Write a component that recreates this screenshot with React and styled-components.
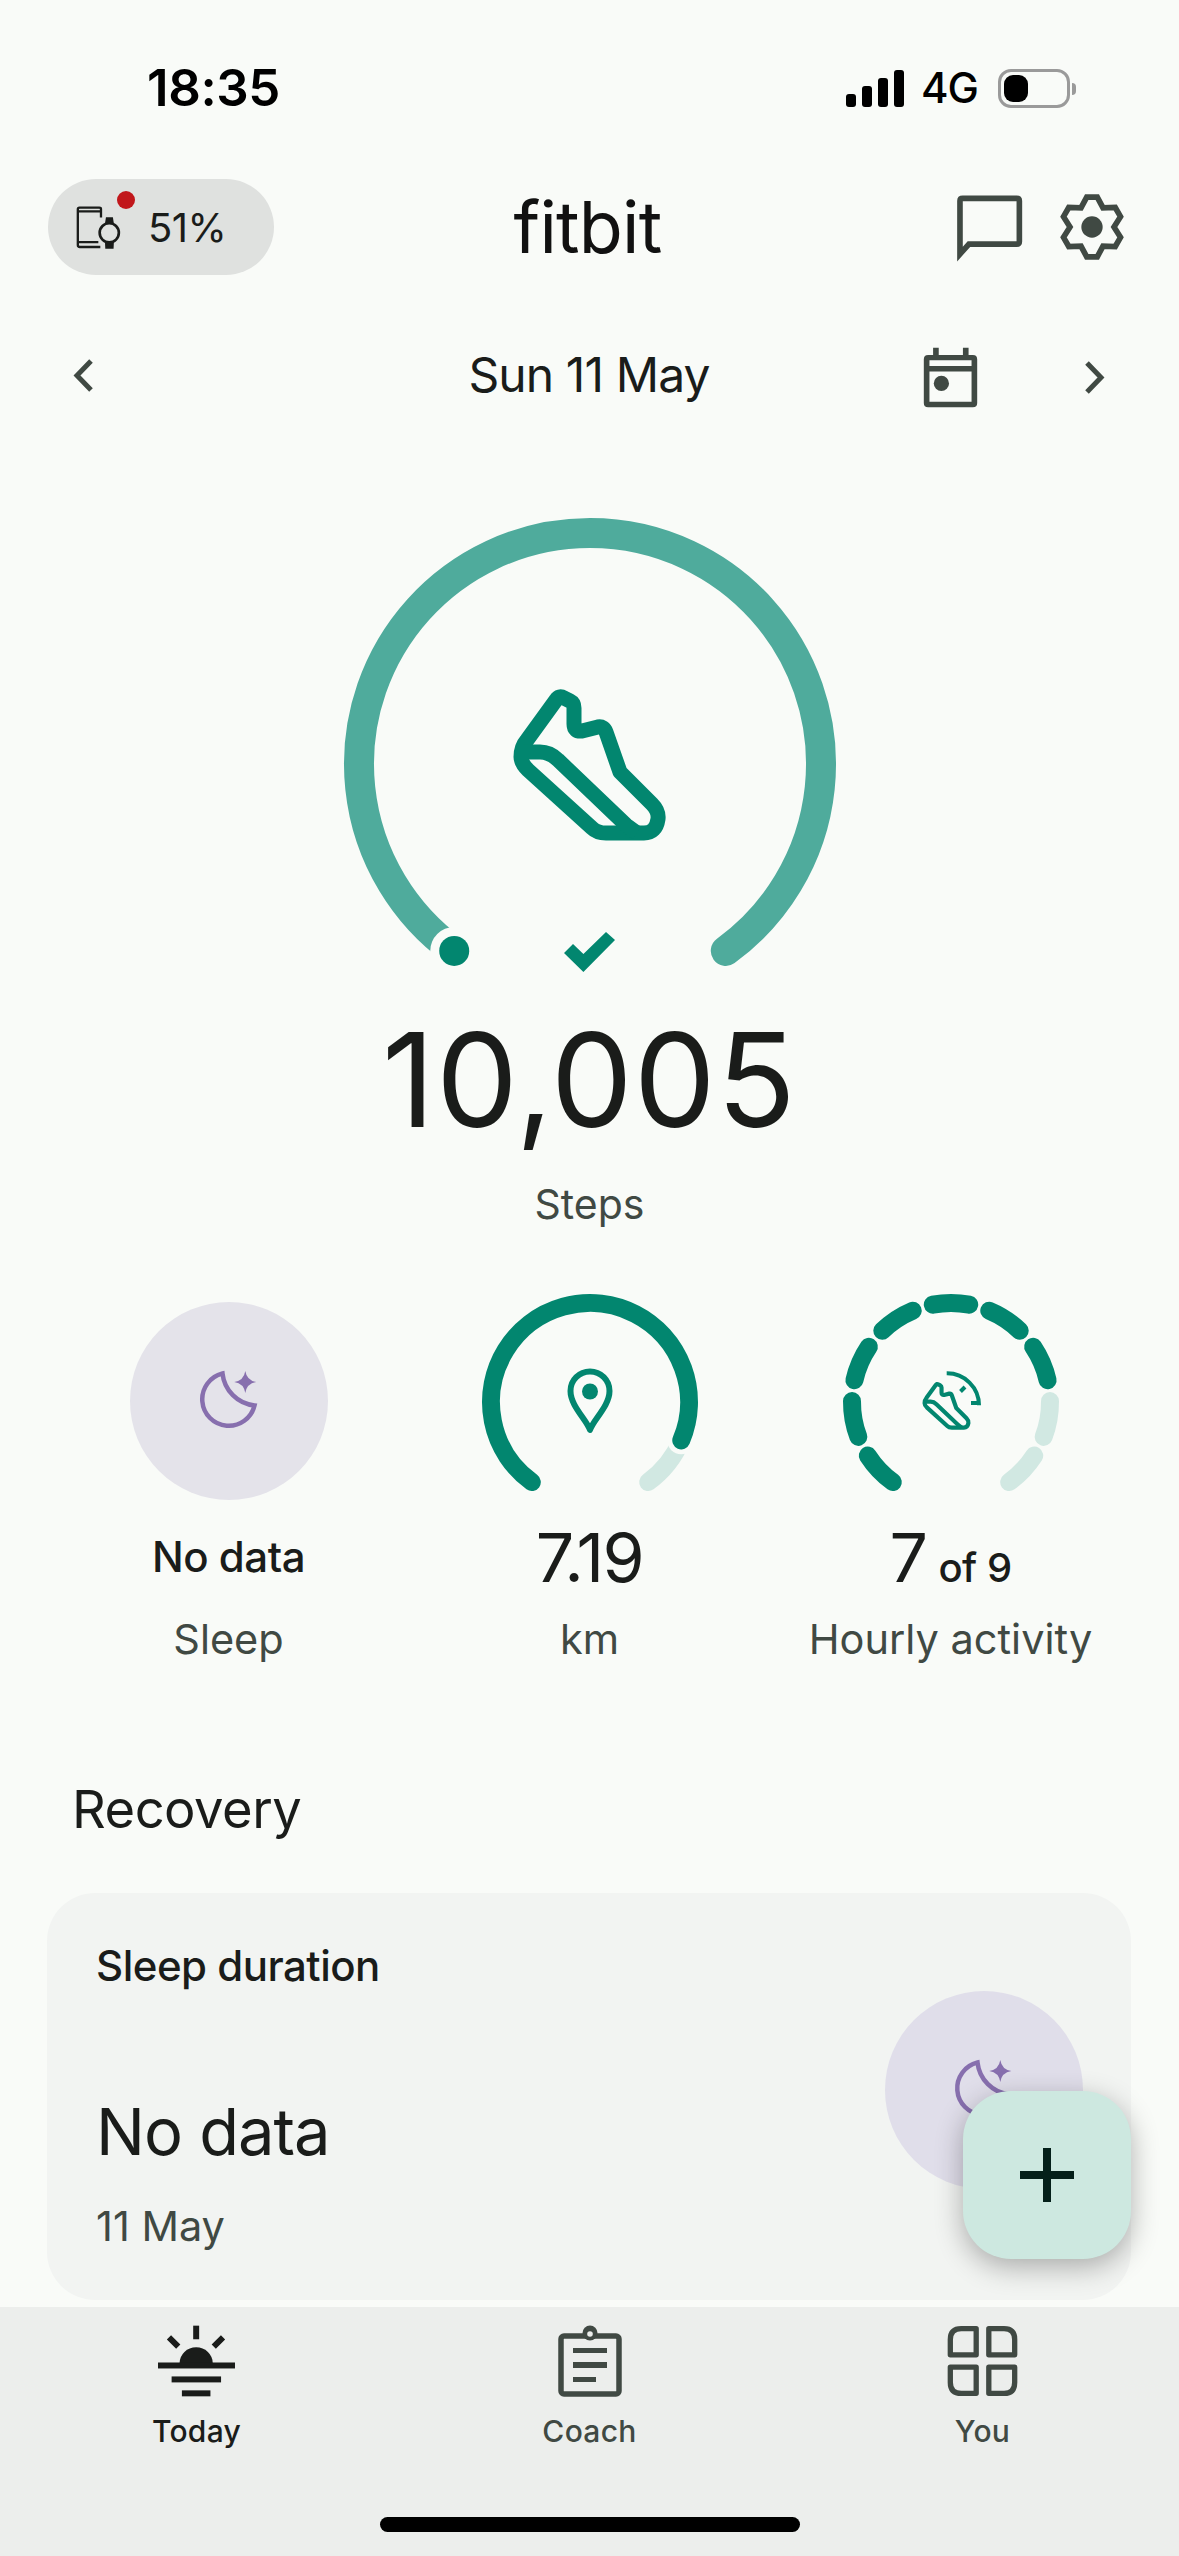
import styled, { createGlobalStyle } from "styled-components";

const TEAL = "#02866f";
const TEAL_MID = "#4fab9c";
const TEAL_PALE = "#d1e8e2";
const BG = "#f9fbf8";
const INK = "#1a1c1a";
const SOFT = "#404943";
const PURPLE = "#876fae";

const Global = createGlobalStyle`
    html, body { margin: 0; padding: 0; background: ${BG}; }
    body { font-family: Inter, "Noto Sans", sans-serif; color: ${INK}; }
`;

const Page = styled.div`
    position: relative;
    width: 1179px;
    height: 2556px;
    overflow: hidden;
    display: flex;
    flex-direction: column;
    background: ${BG};
`;
const Content = styled.main`
    flex: 1;
    min-height: 0;
    overflow: hidden;
`;

const StatusBar = styled.div`
    height: 179px;
    box-sizing: border-box;
    padding: 62px 109px 0 147px;
    display: flex;
    justify-content: space-between;
    align-items: flex-start;
`;
const Time = styled.div`
    font-size: 51px;
    line-height: 52px;
    font-weight: 600;
    color: #000;
    letter-spacing: -0.4px;
`;
const StatusRight = styled.div`
    display: flex;
    align-items: center;
    height: 52px;
`;
const Signal = styled.div`
    display: flex;
    align-items: flex-end;
    gap: 6px;
    height: 37px;
    margin-right: 17px;
`;
const SignalBar = styled.i`
    display: block;
    width: 10px;
    height: ${p => p.$h}px;
    border-radius: 3px;
    background: #000;
`;
const Network = styled.span`
    font-size: 42px;
    line-height: 52px;
    font-weight: 500;
    color: #000;
    letter-spacing: -1px;
    margin-right: 20px;
`;
const Battery = styled.div`
    position: relative;
    width: 72px;
    height: 39px;
    box-sizing: border-box;
    border: 3px solid #9a9a9a;
    border-radius: 13px;
    padding: 3px;
    &::before {
        content: "";
        display: block;
        width: 24px;
        height: 100%;
        border-radius: 9px;
        background: #000;
    }
    &::after {
        content: "";
        position: absolute;
        right: -9px;
        top: 11px;
        width: 4px;
        height: 12px;
        border-radius: 0 4px 4px 0;
        background: #9a9a9a;
    }
`;

const Header = styled.header`
    height: 96px;
    padding: 0 52px 0 48px;
    display: grid;
    grid-template-columns: 1fr auto 1fr;
    align-items: center;
`;
const DevicePill = styled.div`
    position: relative;
    width: 226px;
    height: 96px;
    box-sizing: border-box;
    padding-left: 27px;
    border-radius: 48px;
    background: #dfe1df;
    display: flex;
    align-items: center;
    gap: 25px;
    font-size: 40px;
    font-weight: 400;
    letter-spacing: -0.5px;
`;
const RedDot = styled.span`
    position: absolute;
    left: 69px;
    top: 12px;
    width: 18px;
    height: 18px;
    border-radius: 50%;
    background: #c1171b;
`;
const Logo = styled.div`
    font-size: 72px;
    line-height: 96px;
    font-weight: 400;
    color: #111;
    letter-spacing: -0.8px;
`;
const HeaderIcons = styled.div`
    display: flex;
    justify-content: flex-end;
    align-items: center;
    gap: 33px;
`;

const DateRow = styled.div`
    margin-top: 62px;
    height: 80px;
    padding: 0 74px 0 73px;
    display: grid;
    grid-template-columns: 1fr auto 1fr;
    align-items: center;
`;
const DateLabel = styled.div`
    font-size: 48px;
    line-height: 76px;
    padding-bottom: 4px;
    font-weight: 400;
    letter-spacing: -0.9px;
`;
const DateRight = styled.div`
    display: flex;
    justify-content: flex-end;
    align-items: center;
    gap: 106px;
`;

const GaugeSvg = styled.svg`
    display: block;
    margin: 93px auto 0;
`;
const StepsValue = styled.div`
    margin-top: 34px;
    text-align: center;
    font-size: 130px;
    line-height: 132px;
    font-weight: 400;
    letter-spacing: 1px;
`;
const StepsLabel = styled.div`
    margin-top: 28px;
    text-align: center;
    font-size: 41px;
    line-height: 60px;
    color: ${SOFT};
`;

const Metrics = styled.section`
    margin-top: 59px;
    padding: 0 48px;
    display: grid;
    grid-template-columns: repeat(3, 1fr);
`;
const Metric = styled.div`
    display: flex;
    flex-direction: column;
    align-items: center;
`;
const MetricVisual = styled.div`
    height: 216px;
    display: flex;
    align-items: center;
    justify-content: center;
`;
const MoonCircle = styled.div`
    flex: none;
    width: 198px;
    height: 198px;
    border-radius: 50%;
    background: #e4e3ea;
    display: flex;
    align-items: center;
    justify-content: center;
`;
const MetricValue = styled.div`
    margin-top: 13px;
    height: 70px;
    line-height: 70px;
    font-size: ${p => (p.$small ? 42 : 68)}px;
    font-weight: ${p => (p.$small ? 500 : 400)};
    letter-spacing: ${p => (p.$small ? -0.5 : -1.5)}px;
    white-space: nowrap;
`;
const ValueSuffix = styled.span`
    font-size: 40px;
    font-weight: 500;
    letter-spacing: -0.5px;
    margin-left: 12px;
`;
const MetricLabel = styled.div`
    margin-top: 17px;
    font-size: 41.5px;
    line-height: 60px;
    color: ${SOFT};
    white-space: nowrap;
`;

const SectionTitle = styled.h2`
    margin: 105px 0 0;
    padding-left: 72px;
    font-size: 52.5px;
    line-height: 70px;
    font-weight: 400;
    letter-spacing: -0.5px;
`;
const Card = styled.section`
    margin: 49px 48px 0 47px;
    height: 407px;
    box-sizing: border-box;
    padding: 43px 48px 0 49px;
    border-radius: 48px;
    background: #f2f4f2;
    display: flex;
    justify-content: space-between;
    align-items: flex-start;
`;
const CardTitle = styled.div`
    font-size: 42px;
    line-height: 60px;
    font-weight: 500;
    letter-spacing: -0.5px;
`;
const CardValue = styled.div`
    margin-top: 96px;
    font-size: 65px;
    line-height: 80px;
    font-weight: 400;
    letter-spacing: -1px;
`;
const CardDate = styled.div`
    margin-top: 26px;
    font-size: 41.5px;
    line-height: 56px;
    color: ${SOFT};
`;
const CardCircle = styled(MoonCircle)`
    margin-top: 55px;
    background: #e0deea;
`;

const Fab = styled.button`
    position: absolute;
    right: 48px;
    bottom: 297px;
    width: 168px;
    height: 168px;
    padding: 0;
    border: none;
    border-radius: 48px;
    background: #cde8e0;
    box-shadow: 0 8px 28px rgba(0, 0, 0, 0.3);
    display: flex;
    align-items: center;
    justify-content: center;
`;

const BottomNav = styled.nav`
    flex: none;
    height: 249px;
    background: #eceeec;
`;
const NavItems = styled.div`
    padding-top: 16px;
    height: 140px;
    display: grid;
    grid-template-columns: repeat(3, 1fr);
`;
const NavItem = styled.a`
    display: flex;
    flex-direction: column;
    align-items: center;
    color: ${p => (p.$active ? INK : SOFT)};
`;
const NavIcon = styled.div`
    height: 76px;
    display: flex;
    align-items: center;
    justify-content: center;
`;
const NavLabel = styled.span`
    margin-top: 12px;
    font-size: 30px;
    line-height: 40px;
    font-weight: 500;
    letter-spacing: 0.3px;
`;
const HomeBar = styled.div`
    width: 420px;
    height: 15px;
    margin: 54px auto 0;
    border-radius: 8px;
    background: #000;
`;

// angle in degrees, 0 at the top, clockwise
const pt = (cx, cy, r, deg) => {
    const a = (deg * Math.PI) / 180;
    return [cx + r * Math.sin(a), cy - r * Math.cos(a)];
};
const arc = (cx, cy, r, from, to) => {
    const [x0, y0] = pt(cx, cy, r, from);
    const [x1, y1] = pt(cx, cy, r, to);
    const large = to - from > 180 ? 1 : 0;
    return `M${x0.toFixed(2)} ${y0.toFixed(2)} A${r} ${r} 0 ${large} 1 ${x1.toFixed(2)} ${y1.toFixed(2)}`;
};

const SHOE = "M556 700 Q559 695 564 698 L570 701 Q574 703 574 708 V724 Q574 732 582 731 L598 727 Q604 726 606 732 L620 772 L652 804 Q659 811 658 819 Q656 833 644 833 H606 Q597 833 592 828 L528 770 Q521 763 521 757 Q521 747 527 740 Z";
const SHOE_SOLE = "M523 752 H540 Q550 752 558 760 L626 825 L637 833";

function StepsGauge() {
    const cx = 590, cy = 764, r = 231;
    const [dx, dy] = pt(cx, cy, r, -144);
    return (
        <GaugeSvg width="520" height="470" viewBox="330 510 520 470">
            <path d={arc(cx, cy, r, -144, 144)} fill="none" stroke={TEAL_MID} strokeWidth="30" strokeLinecap="round" />
            <circle cx={dx} cy={dy} r="24" fill={BG} />
            <circle cx={dx} cy={dy} r="15" fill={TEAL} />
            <path d={SHOE} fill="none" stroke={TEAL} strokeWidth="15" strokeLinejoin="round" />
            <path d={SHOE_SOLE} fill="none" stroke={TEAL} strokeWidth="15" />
            <polygon points="564,953 573,944 583.4,954 606,932 615,940 583.4,972" fill={TEAL} />
        </GaugeSvg>
    );
}

function DistanceGauge() {
    const [hx, hy] = pt(0, 0, 99, 112.8);
    return (
        <svg width="220" height="216" viewBox="-110 -109 220 216">
            <path d={arc(0, 0, 99, 112.8, 144)} fill="none" stroke={TEAL_PALE} strokeWidth="18" strokeLinecap="round" />
            <circle cx={hx} cy={hy} r="14" fill={BG} />
            <path d={arc(0, 0, 99, -144, 112.8)} fill="none" stroke={TEAL} strokeWidth="18" strokeLinecap="round" />
            <path d="M0 28 C-3 18 -19.5 4 -19.5 -11 A19.5 19.5 0 0 1 19.5 -11 C19.5 4 3 18 0 28 Z" fill="none" stroke={TEAL} strokeWidth="6" strokeLinejoin="round" />
            <circle cx="0" cy="-10.5" r="8" fill={TEAL} />
        </svg>
    );
}

function HourlyGauge() {
    const pitch = 33.35, half = 10.6;
    const segments = [];
    for (let i = 0; i < 9; i++) {
        const mid = -4 * pitch + i * pitch;
        segments.push(
            <path key={i} d={arc(0, 0, 99, mid - half, mid + half)} fill="none" stroke={i < 7 ? TEAL : TEAL_PALE} strokeWidth="18" strokeLinecap="round" />
        );
    }
    return (
        <svg width="220" height="216" viewBox="-110 -109 220 216">
            {segments}
            <g transform="translate(-4.5 3.8) scale(.32) translate(-589.5 -765)">
                <path d={SHOE} fill="none" stroke={TEAL} strokeWidth="13" strokeLinejoin="round" />
                <path d={SHOE_SOLE} fill="none" stroke={TEAL} strokeWidth="13" />
            </g>
            <path d="M-4.3 -28.7 A32 32 0 0 1 28 3.3" fill="none" stroke={TEAL} strokeWidth="4" />
            <path d="M14 -15 L9.5 -10.5 M26 1 H20" fill="none" stroke={TEAL} strokeWidth="4" />
        </svg>
    );
}

function MoonIcon() {
    return (
        <svg width="64" height="64" viewBox="0 0 64 64">
            <path d="M25.5 4.5 A26.5 26.5 0 1 0 57.5 36.5 A36 36 0 0 1 25.5 4.5 Z" fill="none" stroke={PURPLE} strokeWidth="4.5" />
            <path d="M48.3 2 Q49.8 11.5 59.3 13 Q49.8 14.5 48.3 24 Q46.8 14.5 37.3 13 Q46.8 11.5 48.3 2 Z" fill={PURPLE} />
        </svg>
    );
}

function DeviceIcon() {
    return (
        <svg width="48" height="45" viewBox="90 88 144 136">
            <path d="M168 126 V100 Q168 96 163 96 H103 Q98 96 98 101 V209 Q98 215 104 215 H166 M98 107 H168 M98 200 H160" fill="none" stroke={INK} strokeWidth="7" />
            <circle cx="193" cy="172" r="29" fill="none" stroke={INK} strokeWidth="8" />
            <path d="M180 145 L183 125 H204 L207 145 Z M180 199 H207 L206 220 H181 Z" fill={INK} />
        </svg>
    );
}

function ChatIcon() {
    return (
        <svg width="69" height="69" viewBox="30 22 208 206">
            <path d="M45 205 V45 Q45 37 53 37 H216 Q224 37 224 45 V167 Q224 175 216 175 H72 Z" fill="none" stroke={SOFT} strokeWidth="17" />
        </svg>
    );
}

function GearIcon() {
    const pts = [];
    for (let k = 0; k < 6; k++) {
        const a = k * 60;
        pts.push(pt(0, 0, 91, a - 10), pt(0, 0, 91, a + 10), pt(0, 0, 66, a + 30));
    }
    return (
        <svg width="70" height="70" viewBox="-105 -105 210 210">
            <polygon points={pts.map(p => p.map(n => n.toFixed(1)).join(",")).join(" ")} fill="none" stroke={SOFT} strokeWidth="17" />
            <circle r="32" fill={SOFT} />
        </svg>
    );
}

function CalendarIcon() {
    return (
        <svg width="55" height="61" viewBox="40 18 165 184">
            <path d="M70 20 H87 V42 H160 V20 H177 V42 H190 Q203 42 203 55 V187 Q203 200 190 200 H55 Q42 200 42 187 V55 Q42 42 55 42 H70 Z M59 58 V75 H186 V58 Z M59 92 V183 H186 V92 Z" fill={SOFT} fillRule="evenodd" />
            <circle cx="95" cy="128" r="23" fill={SOFT} />
        </svg>
    );
}

function Chevron({ left }) {
    return (
        <svg width="21" height="33" viewBox="0 0 21 33">
            <path d={left ? "M18 2 L4 16.5 L18 31" : "M3 2 L17 16.5 L3 31"} fill="none" stroke={SOFT} strokeWidth="5" />
        </svg>
    );
}

function SunIcon() {
    return (
        <svg width="79" height="72" viewBox="50 25 236 217" fill={INK}>
            <rect x="158" y="27" width="18" height="41" />
            <path d="M85 62 L113 90 M248 62 L220 90" stroke={INK} strokeWidth="18" />
            <path d="M117 140 A50 48 0 0 1 217 140 Z" />
            <rect x="52" y="138" width="232" height="18" />
            <rect x="93" y="180" width="149" height="18" />
            <rect x="124" y="222" width="86" height="18" />
        </svg>
    );
}

function CoachIcon() {
    return (
        <svg width="68" height="75" viewBox="555 2322 68 75">
            <rect x="560" y="2334" width="58" height="58" rx="3" fill="none" stroke={SOFT} strokeWidth="5.5" />
            <circle cx="589" cy="2331" r="7.5" fill={SOFT} />
            <circle cx="589" cy="2332" r="2.8" fill="#eceeec" />
            <path d="M572 2346 H606 V2351 H572 Z M572 2360 H606 V2366 H572 Z M572 2375 H595 V2380 H572 Z" fill={SOFT} />
        </svg>
    );
}

function YouIcon() {
    return (
        <svg width="71" height="72" viewBox="50 35 214 215">
            <path d="M138 45 V124 H60 V78 Q60 45 93 45 Z M176 45 H222 Q254 45 254 78 V124 H176 Z M60 161 H138 V240 H93 Q60 240 60 207 Z M176 161 H254 V207 Q254 240 222 240 H176 Z" fill="none" stroke={SOFT} strokeWidth="16" strokeLinejoin="round" />
        </svg>
    );
}

export default function App() {
    return (
        <Page>
            <Global />
            <Content>
                <StatusBar>
                    <Time>18:35</Time>
                    <StatusRight>
                        <Signal>
                            {[13, 21, 29, 37].map(h => <SignalBar key={h} $h={h} />)}
                        </Signal>
                        <Network>4G</Network>
                        <Battery />
                    </StatusRight>
                </StatusBar>
                <Header>
                    <DevicePill>
                        <DeviceIcon />
                        <RedDot />
                        51%
                    </DevicePill>
                    <Logo>fitbit</Logo>
                    <HeaderIcons>
                        <ChatIcon />
                        <GearIcon />
                    </HeaderIcons>
                </Header>
                <DateRow>
                    <div><Chevron left /></div>
                    <DateLabel>Sun 11 May</DateLabel>
                    <DateRight>
                        <CalendarIcon />
                        <Chevron />
                    </DateRight>
                </DateRow>
                <StepsGauge />
                <StepsValue>10,005</StepsValue>
                <StepsLabel>Steps</StepsLabel>
                <Metrics>
                    <Metric>
                        <MetricVisual>
                            <MoonCircle><MoonIcon /></MoonCircle>
                        </MetricVisual>
                        <MetricValue $small>No data</MetricValue>
                        <MetricLabel>Sleep</MetricLabel>
                    </Metric>
                    <Metric>
                        <MetricVisual><DistanceGauge /></MetricVisual>
                        <MetricValue>7.19</MetricValue>
                        <MetricLabel>km</MetricLabel>
                    </Metric>
                    <Metric>
                        <MetricVisual><HourlyGauge /></MetricVisual>
                        <MetricValue>7<ValueSuffix>of 9</ValueSuffix></MetricValue>
                        <MetricLabel>Hourly activity</MetricLabel>
                    </Metric>
                </Metrics>
                <SectionTitle>Recovery</SectionTitle>
                <Card>
                    <div>
                        <CardTitle>Sleep duration</CardTitle>
                        <CardValue>No data</CardValue>
                        <CardDate>11 May</CardDate>
                    </div>
                    <CardCircle><MoonIcon /></CardCircle>
                </Card>
            </Content>
            <Fab aria-label="Add">
                <svg width="54" height="54" viewBox="0 0 54 54">
                    <path d="M23 0 H31 V23 H54 V31 H31 V54 H23 V31 H0 V23 H23 Z" fill="#04201a" />
                </svg>
            </Fab>
            <BottomNav>
                <NavItems>
                    <NavItem $active>
                        <NavIcon><SunIcon /></NavIcon>
                        <NavLabel>Today</NavLabel>
                    </NavItem>
                    <NavItem>
                        <NavIcon><CoachIcon /></NavIcon>
                        <NavLabel>Coach</NavLabel>
                    </NavItem>
                    <NavItem>
                        <NavIcon><YouIcon /></NavIcon>
                        <NavLabel>You</NavLabel>
                    </NavItem>
                </NavItems>
                <HomeBar />
            </BottomNav>
        </Page>
    );
}
